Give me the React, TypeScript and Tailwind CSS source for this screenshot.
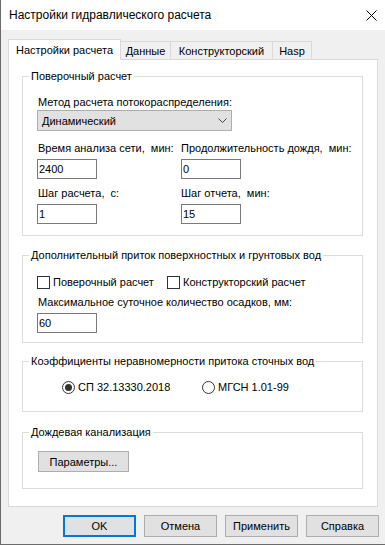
import React from "react";

const tabs = [
  { name: "Данные", w: "w-[50px]" },
  { name: "Конструкторский", w: "w-[102px]" },
  { name: "Hasp", w: "w-[39px]" },
];

const buttons = ["OK", "Отмена", "Применить", "Справка"];

const TextBox: React.FC<{ value: string }> = ({ value }) => (
  <div className="mt-[4px] h-[20px] w-[60px] border border-[#7a7a7a] bg-white pl-[1px] flex items-center leading-[14px]">
    {value}
  </div>
);

const Group: React.FC<{ title: string; className?: string; children: React.ReactNode }> = ({
  title,
  className,
  children,
}) => (
  <fieldset className={"w-[341px] border border-[#dcdcdc] min-w-0 " + (className ?? "")}>
    <legend className="ml-[6px] px-[2px] leading-[14px]">{title}</legend>
    {children}
  </fieldset>
);

const CheckBox: React.FC<{ label: string; className?: string }> = ({ label, className }) => (
  <div className={"flex items-center " + (className ?? "")}>
    <span className="w-[13px] h-[13px] border border-[#333333] bg-white" />
    <span className="ml-[3px] leading-[14px]">{label}</span>
  </div>
);

const Radio: React.FC<{ label: string; checked?: boolean; className?: string }> = ({
  label,
  checked,
  className,
}) => (
  <div className={"flex items-center " + (className ?? "")}>
    <span className="w-[13px] h-[13px] rounded-full border border-[#333333] bg-white flex items-center justify-center">
      {checked && <span className="w-[7px] h-[7px] rounded-full bg-[#333333]" />}
    </span>
    <span className="ml-[3px] leading-[14px]">{label}</span>
  </div>
);

const App: React.FC = () => {
  return (
    <div className="w-[385px] h-[545px] bg-[#f0f0f0] border-l border-b border-[#6b6b6b] flex flex-col font-['Liberation_Sans',Arial,sans-serif] text-[11px] text-black overflow-hidden">
      {/* title bar */}
      <div className="h-[30px] bg-white flex items-center justify-between pl-[8px] pr-[8px]">
        <span className="text-[12px]">Настройки гидравлического расчета</span>
        <svg width="11" height="11" viewBox="0 0 11 11" className="mt-[1px]">
          <path d="M0.5 0.5 L10.5 10.5 M10.5 0.5 L0.5 10.5" stroke="#000" strokeWidth="1" fill="none" />
        </svg>
      </div>

      <div className="pl-[7px] pt-[9px]">
        {/* tabs */}
        <div className="flex items-end h-[20px]">
          <div className="relative z-10 w-[113px] h-[21px] -mb-[1px] bg-white border-l border-t border-r border-[#d9d9d9] flex items-center justify-center leading-[14px]">
            Настройки расчета
          </div>
          {tabs.map((t) => (
            <div
              key={t.name}
              className={t.w + " h-[18px] bg-[#f0f0f0] border-t border-r border-[#d9d9d9] flex items-center justify-center leading-[14px]"}
            >
              {t.name}
            </div>
          ))}
        </div>

        {/* tab page */}
        <div className="w-[370px] h-[448px] bg-white border border-[#d9d9d9] pt-[9px] pl-[13px]">
          <Group title="Поверочный расчет">
            <div className="pl-[14px] pb-[11px]">
              <div className="mt-[12px] leading-[14px] pl-[1px]">Метод расчета потокораспределения:</div>
              <div className="mt-[1px] h-[21px] w-[195px] bg-[#e1e1e1] border border-[#adadad] flex items-center justify-between pl-[4px] pr-[4px]">
                <span className="leading-[14px]">Динамический</span>
                <svg width="9" height="5" viewBox="0 0 9 5">
                  <path d="M0.5 0.5 L4.5 4.5 L8.5 0.5" stroke="#444" strokeWidth="1" fill="none" />
                </svg>
              </div>
              <div className="mt-[10px] grid grid-cols-[144px_1fr]">
                <div>
                  <div className="leading-[14px] pl-[1px]">Время анализа сети,&nbsp; мин:</div>
                  <TextBox value="2400" />
                </div>
                <div>
                  <div className="leading-[14px]">Продолжительность дождя,&nbsp; мин:</div>
                  <TextBox value="0" />
                </div>
              </div>
              <div className="mt-[7px] grid grid-cols-[144px_1fr]">
                <div>
                  <div className="leading-[14px] pl-[1px] mb-[1px]">Шаг расчета,&nbsp; с:</div>
                  <TextBox value="1" />
                </div>
                <div>
                  <div className="leading-[14px] mb-[1px]">Шаг отчета,&nbsp; мин:</div>
                  <TextBox value="15" />
                </div>
              </div>
            </div>
          </Group>

          <Group title="Дополнительный приток поверхностных и грунтовых вод" className="mt-[12px]">
            <div className="pl-[14px] pb-[9px]">
              <div className="mt-[13px] h-[14px] flex items-center">
                <CheckBox label="Поверочный расчет" className="w-[130px]" />
                <CheckBox label="Конструкторский расчет" />
              </div>
              <div className="mt-[6px] leading-[14px] pl-[1px]">Максимальное суточное количество осадков, мм:</div>
              <div className="mt-[2px]">
                <TextBox value="60" />
              </div>
            </div>
          </Group>

          <Group title="Коэффициенты неравномерности притока сточных вод" className="mt-[11px]">
            <div className="pl-[39px] pb-[17px]">
              <div className="mt-[12px] h-[14px] flex items-center">
                <Radio label="СП 32.13330.2018" checked className="w-[140px]" />
                <Radio label="МГСН 1.01-99" />
              </div>
            </div>
          </Group>

          <Group title="Дождевая канализация" className="mt-[13px]">
            <div className="pl-[15px] pb-[16px]">
              <button className="mt-[12px] h-[21px] w-[91px] bg-[#e1e1e1] border border-[#adadad] flex items-center justify-center leading-[14px]">
                Параметры...
              </button>
            </div>
          </Group>
        </div>

        {/* dialog buttons */}
        <div className="mt-[8px] ml-[55px] flex gap-[8px]">
          {buttons.map((b, i) => (
            <button
              key={b}
              className={
                i === 0
                  ? "w-[73px] h-[22px] bg-[#e1e1e1] border-2 border-[#0078d7] flex items-center justify-center leading-[14px]"
                  : "w-[73px] h-[22px] bg-[#e1e1e1] border border-[#adadad] flex items-center justify-center leading-[14px]"
              }
            >
              {b}
            </button>
          ))}
        </div>
      </div>
    </div>
  );
};

export default App;
